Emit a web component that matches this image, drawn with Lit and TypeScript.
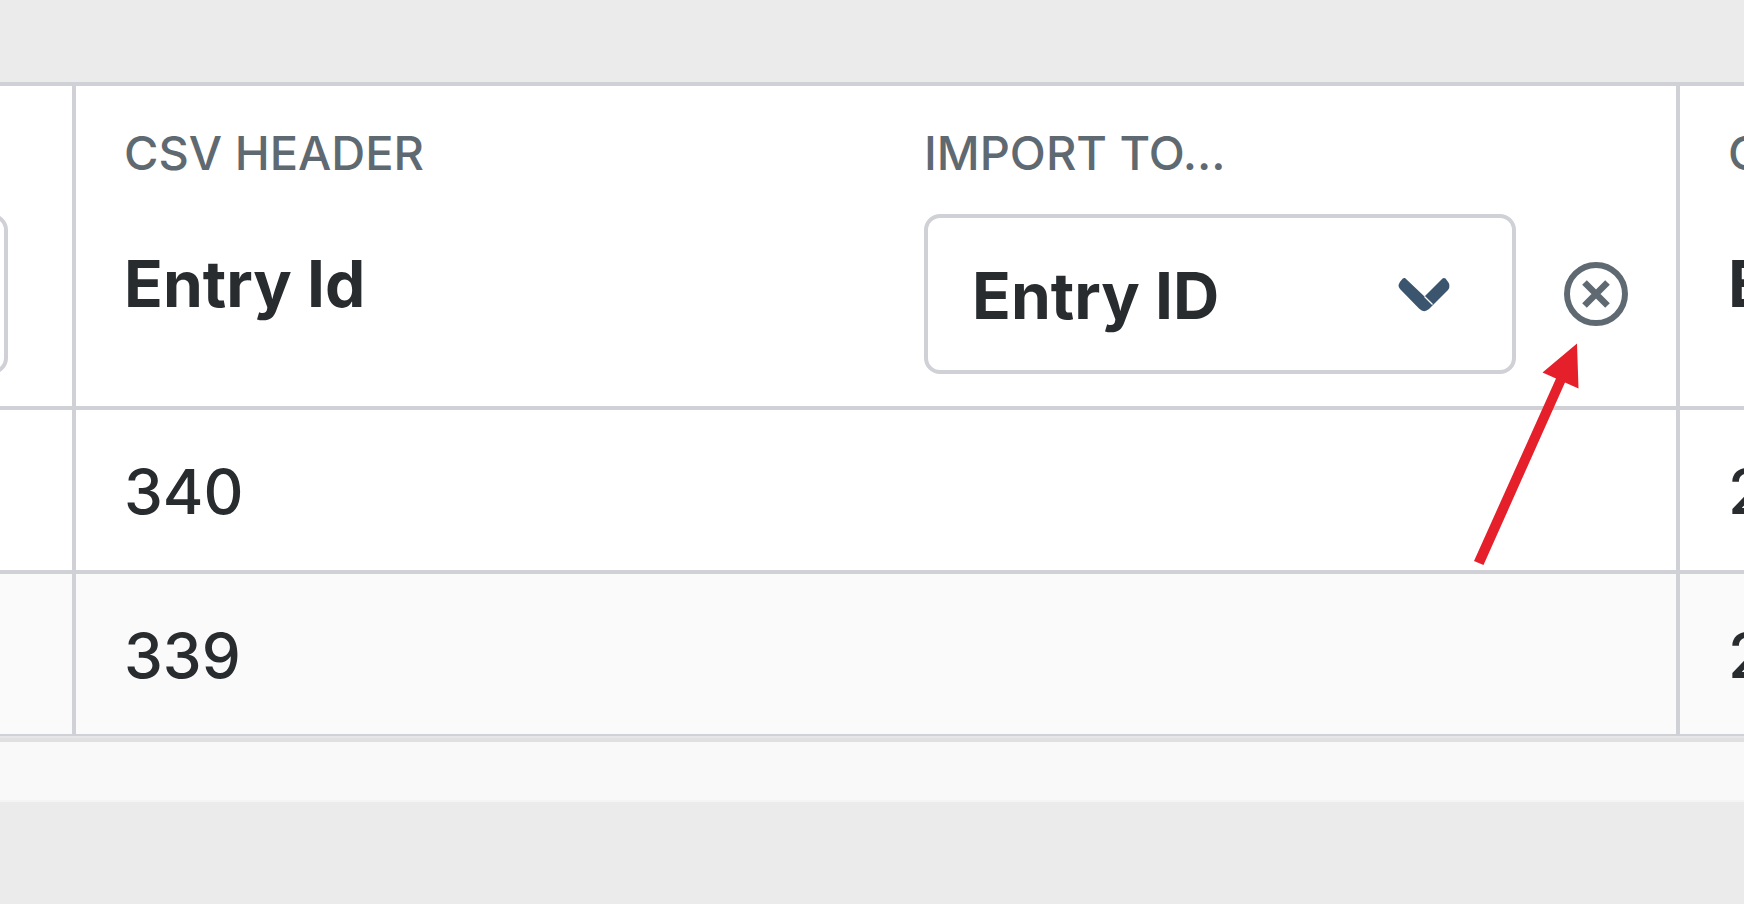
import { LitElement, html, css } from "lit";
import { customElement, state } from "lit/decorators.js";

@customElement("app-root")
export class AppRoot extends LitElement {
  static styles = css`
    :host {
      display: block;
      box-sizing: border-box;
      min-height: 100vh;
      padding: 82px 0;
      overflow: hidden;
      background: #ebebeb;
      color: #282c2f;
      font-family: Inter, "Liberation Sans", sans-serif;
      font-size: 64px;
      line-height: 96px;
    }
    .panel {
      background: #f9f9f9;
      border-bottom: 2px solid #f4f4f4;
      padding-bottom: 58px;
    }
    .frame {
      overflow: hidden;
      border-bottom: 4px solid #e0e0e0;
      background: #e6e6e8;
      padding-bottom: 2px;
    }
    table {
      width: 100%;
      table-layout: fixed;
      border-collapse: separate;
      border-spacing: 0;
      background: #fff;
      border-bottom: 2px solid #d0d1d7;
    }
    .col-prev {
      width: 72px;
    }
    .col-next {
      width: 68px;
    }
    th,
    td {
      padding: 0;
      border-top: 4px solid #d0d1d7;
      text-align: left;
      vertical-align: top;
      font-weight: 400;
    }
    th + th,
    td + td {
      border-left: 4px solid #d0d1d7;
    }
    td {
      padding: 34px 0 30px 48px;
      height: 96px;
      white-space: nowrap;
      font-size: 62px;
      font-weight: 450;
    }
    tbody tr:nth-child(even) td {
      background: #fafafa;
    }
    .mapping {
      display: grid;
      grid-template-columns: 1fr 1fr;
    }
    .part {
      padding: 32px 48px;
      min-width: 0;
      white-space: nowrap;
    }
    .next {
      padding-right: 0;
    }
    .label {
      display: block;
      margin-bottom: 26px;
      color: #5f6971;
      font-size: 47px;
      font-weight: 450;
      line-height: 70px;
    }
    .name {
      display: block;
      padding-top: 22px;
      font-weight: 700;
    }
    .controls {
      display: flex;
      align-items: center;
      gap: 48px;
    }
    .picker {
      position: relative;
      flex: 1;
      display: flex;
      min-width: 0;
    }
    select {
      appearance: none;
      box-sizing: border-box;
      width: 100%;
      height: 160px;
      margin: 0;
      padding: 4px 44px 0;
      border: 4px solid #d0d1d7;
      border-radius: 16px;
      background: #fff;
      color: inherit;
      font: inherit;
      font-weight: 700;
    }
    .chevron {
      position: absolute;
      right: 64px;
      top: 62px;
      width: 56px;
      height: 38px;
      pointer-events: none;
    }
    .prev {
      display: flex;
      justify-content: flex-end;
      padding: 128px 64px 32px 0;
    }
    .prev select {
      flex: none;
      width: 120px;
    }
    .ignore-wrap {
      position: relative;
      display: flex;
    }
    .ignore {
      display: flex;
      margin: 0;
      padding: 0;
      border: 0;
      background: none;
      cursor: pointer;
    }
    .ignore svg {
      width: 64px;
      height: 64px;
    }
    .pointer {
      position: absolute;
      z-index: 1;
      top: 76px;
      right: 34px;
      width: 124px;
      height: 232px;
      pointer-events: none;
    }
  `;

  @state() private rows = [
    ["", "340", "2"],
    ["", "339", "2"],
  ];

  render() {
    return html`
      <main class="panel">
        <div class="frame">
          <table>
            <colgroup>
              <col class="col-prev" />
              <col />
              <col class="col-next" />
            </colgroup>
            <thead>
              <tr>
                <th scope="col">
                  <div class="prev"><select aria-label="Import to"></select></div>
                </th>
                <th scope="col">
                  <div class="mapping">
                    <div class="part">
                      <span class="label">CSV HEADER</span>
                      <span class="name">Entry Id</span>
                    </div>
                    <div class="part">
                      <label class="label" for="target">IMPORT TO...</label>
                      <div class="controls">
                        <div class="picker">
                          <select id="target">
                            <option>Entry ID</option>
                          </select>
                          <svg class="chevron" viewBox="0 0 56 38" aria-hidden="true">
                            <path d="M9 2 Q7 1.500 5.500 4 Q0.500 9 4 13 L23 32.500 Q28 37.500 33 33 L52 14 Q55.500 9.500 51 4.500 Q49 1 46.500 2.500 L28.500 20.500Z" fill="#3b556f" />
                            <path d="M28.500 20.500 36.500 28.500" stroke="#fff" stroke-width="1.300" />
                          </svg>
                        </div>
                        <span class="ignore-wrap">
                          <button class="ignore" type="button" aria-label="Ignore field">
                            <svg viewBox="0 0 64 64" fill="none" stroke="#5f6971">
                              <circle cx="32" cy="32" r="29" stroke-width="6" />
                              <path d="M20.500 20.500 43.500 43.500M43.500 20.500 20.500 43.500" stroke-width="6.500" />
                            </svg>
                          </button>
                          <svg class="pointer" viewBox="0 0 124 232" aria-hidden="true">
                            <path d="M107 5.500 72.500 34.500 86 40.500 4 223 13.500 227 95 44.500 108.500 50.500Z" fill="#e6202a" />
                          </svg>
                        </span>
                      </div>
                    </div>
                  </div>
                </th>
                <th scope="col">
                  <div class="part next">
                    <span class="label">C</span>
                    <span class="name">E</span>
                  </div>
                </th>
              </tr>
            </thead>
            <tbody>
              ${this.rows.map(
                (row) => html`<tr>${row.map((cell) => html`<td>${cell}</td>`)}</tr>`
              )}
            </tbody>
          </table>
        </div>
      </main>
    `;
  }
}
